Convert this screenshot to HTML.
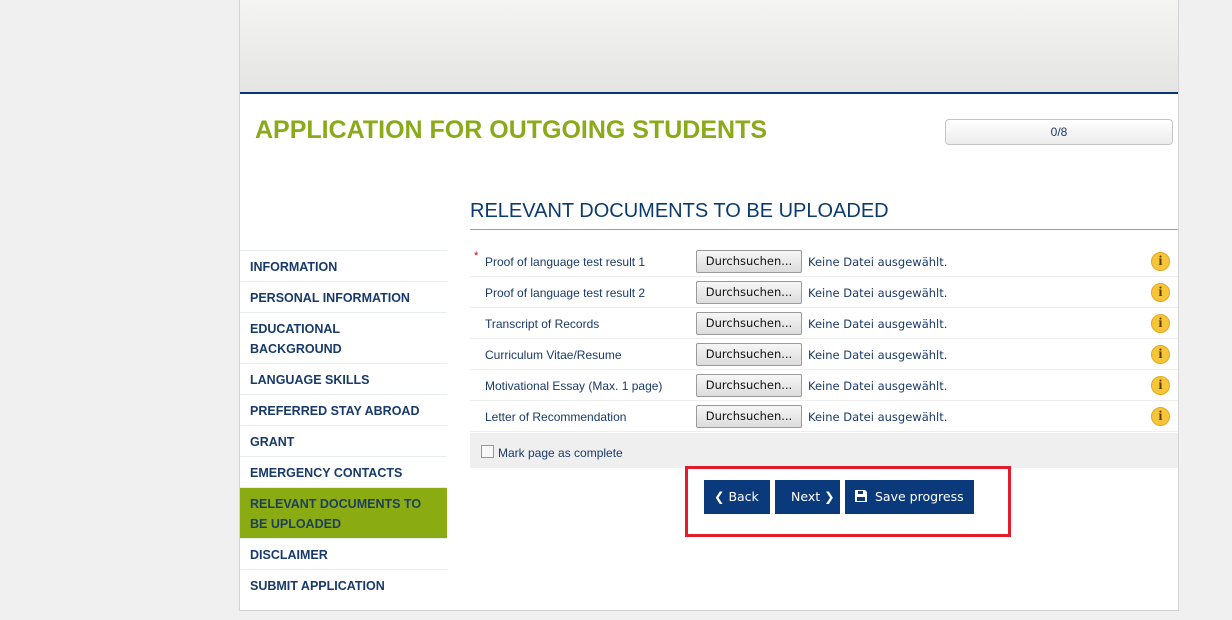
<!DOCTYPE html>
<html><head><meta charset="utf-8"><style>
*{margin:0;padding:0;box-sizing:border-box}
body{width:1232px;height:620px;background:#f0f0f0;font-family:"Liberation Sans",sans-serif;position:relative;overflow:hidden}
.wrap{position:absolute;left:239px;top:0;width:940px;height:611px;background:#fff;border:1px solid #d4d4d4;border-top:none}
.hdr{position:absolute;left:0;top:0;width:938px;height:94px;background:linear-gradient(#f4f4f2,#e4e5e3);border-bottom:2px solid #0b3472}
.title{position:absolute;left:15px;top:116px;font-size:25px;font-weight:bold;color:#8aaa1a}
.prog{position:absolute;left:705px;top:119px;width:228px;height:26px;border:1px solid #c4c4c4;border-radius:4px;background:linear-gradient(#fff,#ececec);text-align:center;font-size:12px;line-height:24px;color:#1a3a6a}
.menu{position:absolute;left:0;top:250px;width:207px;border-top:1px solid #e8eef0}
.menu div{padding:0 10px;font-size:12.5px;font-weight:bold;color:#173a6a;border-bottom:1px solid #e8eef0;line-height:20px;padding-top:6px;padding-bottom:4px}
.menu div:last-child{border-bottom:none}
.menu .act{background:#8aab12;color:#1d3f5a}
.h2{position:absolute;left:230px;top:200px;font-size:20px;color:#0b3b6e;width:708px;border-bottom:1px solid #a8a850;padding-bottom:6px}
.rows{position:absolute;left:230px;top:246px;width:708px}
.row{height:31px;border-bottom:1px solid #eee;position:relative;font-size:12px;color:#1a3a6a}
.row .l{position:absolute;left:15px;top:9px}
.row .st{position:absolute;left:4px;top:4px;color:#c00;font-size:11px}
.btn{position:absolute;left:226px;top:4px;width:106px;height:23px;border:1px solid #9a9a9a;border-radius:2px;background:linear-gradient(#f6f6f6,#dcdcdc);color:#111;text-align:center;line-height:21px;font-family:"DejaVu Sans",sans-serif;font-size:11.5px}
.nf{position:absolute;left:338px;top:9px;font-family:"DejaVu Sans",sans-serif;font-size:11.5px;color:#1a3a6a}
.i{position:absolute;left:681px;top:6px;width:19px;height:19px;border-radius:50%;background:#f7c53a;border:1px solid #e0a820;color:#5a3a00;font-family:"Liberation Serif",serif;font-weight:bold;font-size:14px;text-align:center;line-height:17px}
.mark{position:absolute;left:230px;top:433px;width:708px;height:35px;background:#efefef;font-size:12px;color:#1a3a6a}
.mark .cb{position:absolute;left:11px;top:12px;width:13px;height:13px;border:1px solid #999;background:#f8f8f8}
.mark span{position:absolute;left:28px;top:13px}
.red{position:absolute;left:685px;top:466px;width:326px;height:71px;border:3px solid #e21c2a}
.b{position:absolute;top:480px;height:34px;background:#0b3a7c;color:#fff;font-size:12.5px;font-family:"DejaVu Sans",sans-serif;line-height:34px}
</style></head><body>
<div class="wrap">
<div class="hdr"></div>
<div class="title">APPLICATION FOR OUTGOING STUDENTS</div>
<div class="prog">0/8</div>
<div class="menu">
<div>INFORMATION</div><div>PERSONAL INFORMATION</div><div>EDUCATIONAL<br>BACKGROUND</div><div>LANGUAGE SKILLS</div><div>PREFERRED STAY ABROAD</div><div>GRANT</div><div>EMERGENCY CONTACTS</div><div class="act">RELEVANT DOCUMENTS TO<br>BE UPLOADED</div><div>DISCLAIMER</div><div>SUBMIT APPLICATION</div>
</div>
<div class="h2">RELEVANT DOCUMENTS TO BE UPLOADED</div>
<div class="rows">
<div class="row"><span class="st">*</span><span class="l">Proof of language test result 1</span><div class="btn">Durchsuchen...</div><span class="nf">Keine Datei ausgewählt.</span><div class="i">i</div></div>
<div class="row"><span class="l">Proof of language test result 2</span><div class="btn">Durchsuchen...</div><span class="nf">Keine Datei ausgewählt.</span><div class="i">i</div></div>
<div class="row"><span class="l">Transcript of Records</span><div class="btn">Durchsuchen...</div><span class="nf">Keine Datei ausgewählt.</span><div class="i">i</div></div>
<div class="row"><span class="l">Curriculum Vitae/Resume</span><div class="btn">Durchsuchen...</div><span class="nf">Keine Datei ausgewählt.</span><div class="i">i</div></div>
<div class="row"><span class="l">Motivational Essay (Max. 1 page)</span><div class="btn">Durchsuchen...</div><span class="nf">Keine Datei ausgewählt.</span><div class="i">i</div></div>
<div class="row"><span class="l">Letter of Recommendation</span><div class="btn">Durchsuchen...</div><span class="nf">Keine Datei ausgewählt.</span><div class="i">i</div></div>
</div>
<div class="mark"><div class="cb"></div><span>Mark page as complete</span></div>
</div>
<div class="red"></div>
<div class="b" style="left:704px;width:66px;padding-left:10px">&#10094; Back</div>
<div class="b" style="left:775px;width:65px;padding-left:16px">Next &#10095;</div>
<div class="b" style="left:845px;width:129px;padding-left:10px"><svg width="12" height="12" viewBox="0 0 12 12" style="vertical-align:-1px;margin-right:8px"><path d="M0 0H10L12 2V12H0Z" fill="#fff"/><rect x="3" y="1" width="5" height="3" fill="#0b3a7c"/><rect x="2" y="7" width="8" height="4" fill="#0b3a7c"/></svg>Save progress</div>
</body></html>
